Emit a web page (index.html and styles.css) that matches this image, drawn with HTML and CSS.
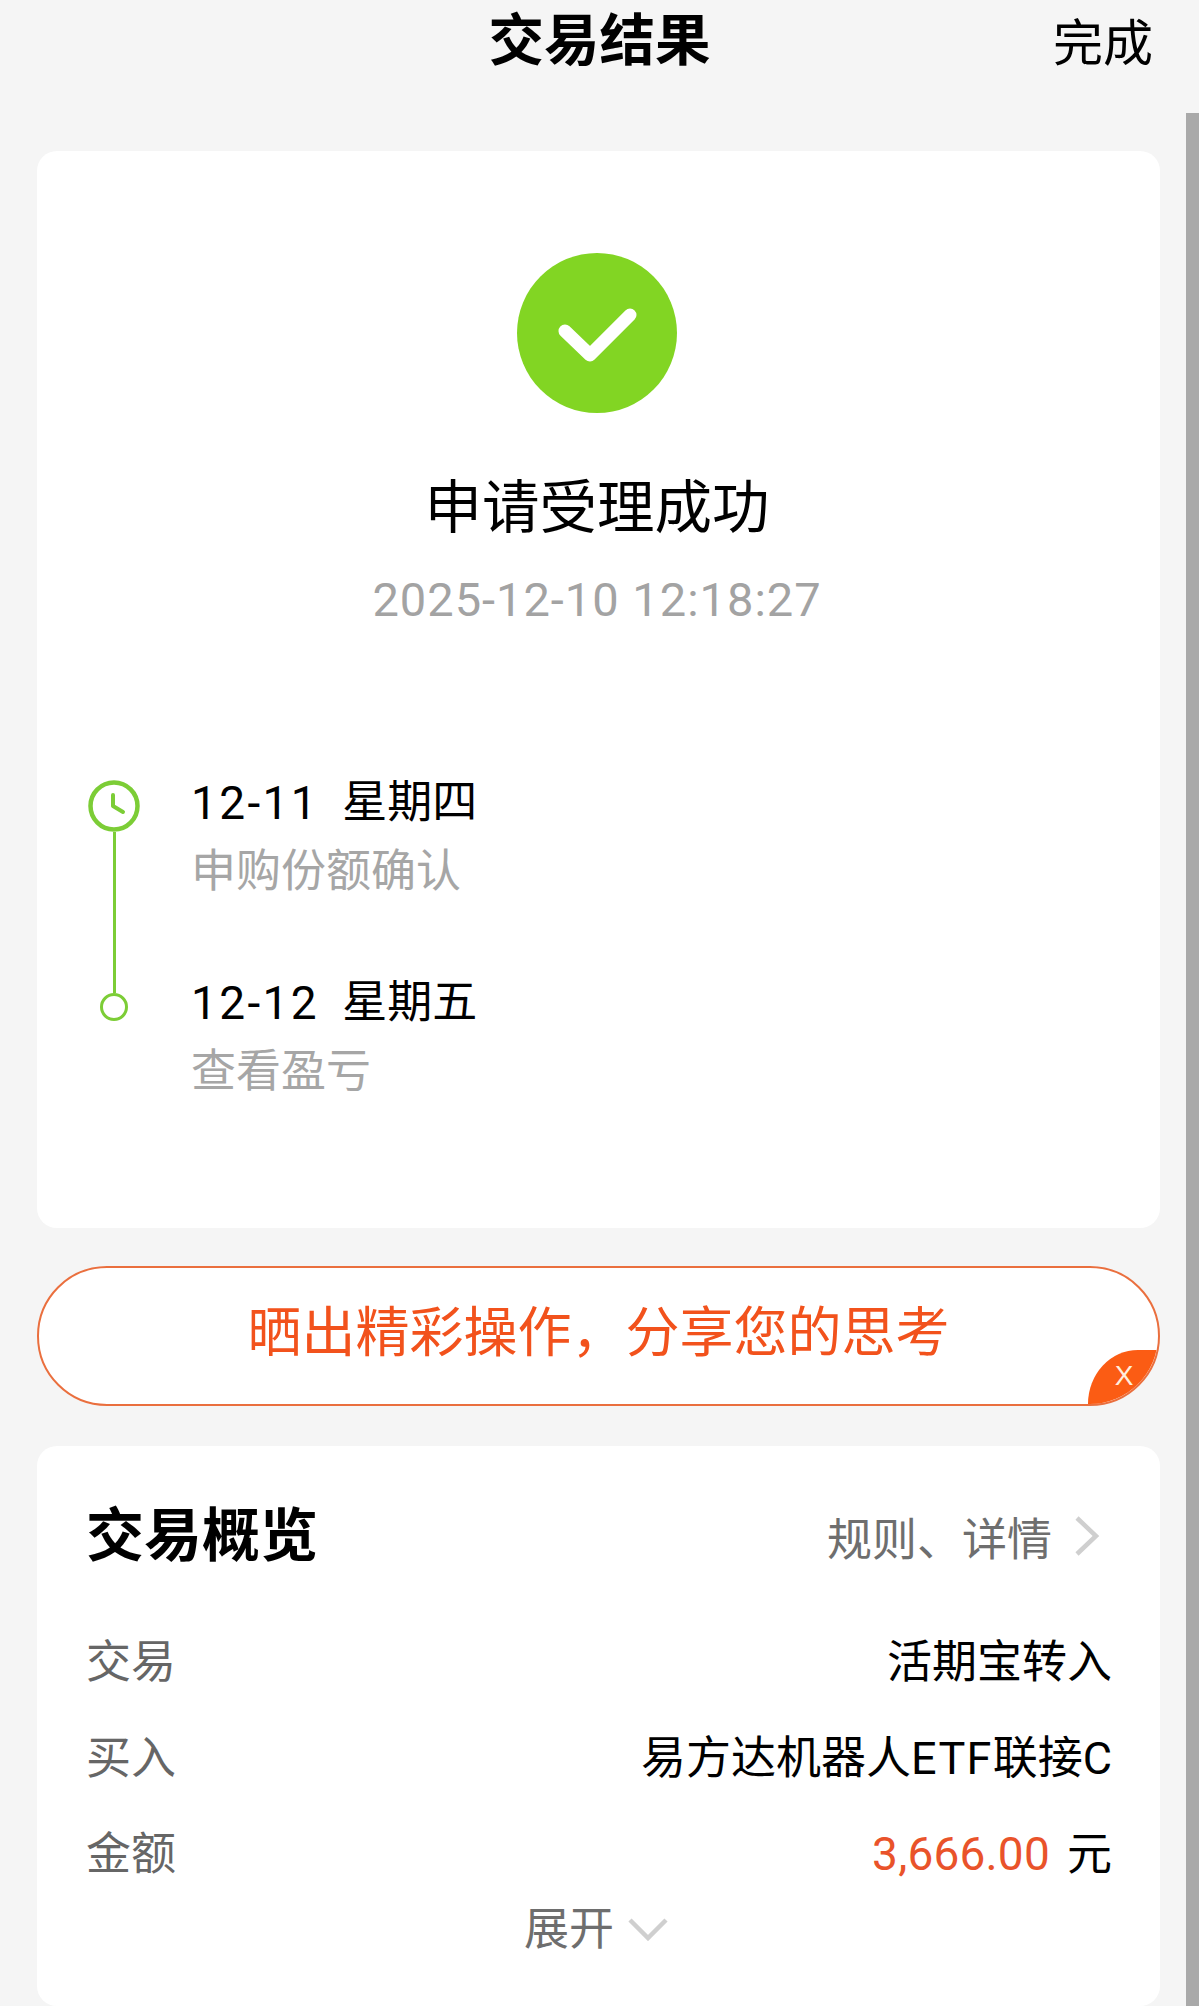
FILE: index.html
```html
<!DOCTYPE html>
<html lang="zh-CN">

<head>
    <meta charset="UTF-8">
    <meta name="viewport" content="width=device-width, initial-scale=1.0">
    <title>交易结果</title>
    <link rel="stylesheet" href="styles.css">
</head>

<body>
    <header class="top">
        <div class="top-title">交易结果</div>
        <div class="top-done">完成</div>
    </header>

    <div class="scrollbar"></div>

    <main class="content">
        <section class="card result">
            <svg class="result-icon" viewBox="0 0 160 160">
                <circle cx="80" cy="80" r="80" fill="#82d523"></circle>
                <path d="M48 78 L73 102 L113 62" fill="none" stroke="#fff" stroke-width="13" stroke-linecap="round" stroke-linejoin="round"></path>
            </svg>
            <div class="result-title">申请受理成功</div>
            <div class="result-time">2025-12-10 12:18:27</div>

            <div class="timeline">
                <div class="rail">
                    <svg class="rail-clock" viewBox="0 0 52 52">
                        <circle cx="26" cy="26" r="23.5" fill="none" stroke="#7ccd36" stroke-width="4.5"></circle>
                        <path d="M25 15 V26 L35 32" fill="none" stroke="#7ccd36" stroke-width="4" stroke-linecap="round" stroke-linejoin="round"></path>
                    </svg>
                    <div class="rail-line"></div>
                    <div class="rail-dot"></div>
                </div>
                <ul class="steps">
                    <li class="step">
                        <div class="step-date"><span class="step-day">12-11</span><span class="step-week">星期四</span></div>
                        <div class="step-desc">申购份额确认</div>
                    </li>
                    <li class="step">
                        <div class="step-date"><span class="step-day">12-12</span><span class="step-week">星期五</span></div>
                        <div class="step-desc">查看盈亏</div>
                    </li>
                </ul>
            </div>
        </section>

        <section class="share">
            <span class="share-text">晒出精彩操作，分享您的思考</span>
            <span class="share-close">X</span>
        </section>

        <section class="card overview">
            <div class="overview-head">
                <div class="overview-title">交易概览</div>
                <div class="overview-link">
                    <span>规则、详情</span>
                    <svg class="arrow-right" viewBox="0 0 28 44">
                        <path d="M4 4 L23 22 L4 40" fill="none" stroke="#cfcfcf" stroke-width="4.5"></path>
                    </svg>
                </div>
            </div>
            <div class="row">
                <span class="row-label">交易</span>
                <span class="row-value">活期宝转入</span>
            </div>
            <div class="row">
                <span class="row-label">买入</span>
                <span class="row-value">易方达机器人<span class="latin">ETF</span>联接C</span>
            </div>
            <div class="row">
                <span class="row-label">金额</span>
                <span class="row-value"><span class="amount">3,666.00</span><span class="unit">元</span></span>
            </div>
            <div class="toggle">
                <span>展开</span>
                <svg class="arrow-down" viewBox="0 0 40 24">
                    <path d="M2 3 L20 21 L38 3" fill="none" stroke="#cfcfcf" stroke-width="4.5"></path>
                </svg>
            </div>
        </section>
    </main>
</body>

</html>
```

FILE: styles.css
```css
html,
body {
    margin: 0;
    padding: 0;
    height: 100%;
}

body {
    position: relative;
    height: 2006px;
    overflow: hidden;
    background: #f5f5f5;
    color: #000;
    font-family: Roboto, "Noto Sans CJK SC", sans-serif;
}

.top {
    display: flex;
    justify-content: center;
    height: 84px;
    padding-bottom: 67px;
    position: relative;
}

.top-title {
    padding-top: 2px;
    font-size: 55.5px;
    font-weight: 700;
    line-height: 80px;
}

.top-done {
    position: absolute;
    top: 4px;
    right: 46px;
    font-size: 50px;
    line-height: 80px;
}

.scrollbar {
    position: absolute;
    top: 113px;
    right: 0;
    bottom: 0;
    width: 13px;
    background: #a9a9a9;
}

.content {
    display: flex;
    flex-direction: column;
    margin: 0 39px 0 37px;
}

.card {
    background: #fff;
    border-radius: 20px;
}

.result {
    display: flex;
    flex-direction: column;
    align-items: center;
    box-sizing: border-box;
    height: 1077px;
    padding: 102px 3px 0 0;
}

.result-icon {
    width: 160px;
    height: 160px;
}

.result-title {
    margin-top: 56px;
    font-size: 57.5px;
    line-height: 80px;
}

.result-time {
    margin-top: 21px;
    font-size: 47px;
    line-height: 60px;
    letter-spacing: 1px;
    color: #a3a3a3;
}

.timeline {
    display: flex;
    align-self: stretch;
    margin-top: 138px;
    padding-left: 49px;
}

.rail {
    display: flex;
    flex-direction: column;
    align-items: center;
    width: 56px;
    margin-right: 49px;
    padding-top: 12px;
}

.rail-clock {
    width: 52px;
    height: 52px;
    flex: none;
}

.rail-line {
    width: 3px;
    height: 161px;
    background: #7ccd36;
}

.rail-dot {
    box-sizing: border-box;
    width: 28px;
    height: 28px;
    border: 3.5px solid #7ccd36;
    border-radius: 50%;
}

.steps {
    list-style: none;
    margin: 0;
    padding: 0;
}

.step {
    margin-bottom: 64px;
}

.step-date {
    display: flex;
    padding-top: 1px;
    height: 67px;
    font-size: 46px;
    line-height: 68px;
}

.step-day {
    letter-spacing: 2.4px;
}

.step-week {
    margin-left: 23px;
    font-size: 45px;
}

.step-desc {
    padding-top: 2px;
    height: 66px;
    font-size: 45px;
    line-height: 68px;
    color: #a6a6a6;
}

.share {
    position: relative;
    display: flex;
    align-items: center;
    justify-content: center;
    box-sizing: border-box;
    height: 140px;
    margin-top: 38px;
    padding-bottom: 4px;
    overflow: hidden;
    background: #fff;
    border: 2px solid #ea6f3e;
    border-radius: 70px;
}

.share-text {
    font-size: 54px;
    line-height: 130px;
    color: #f2521c;
}

.share-close {
    position: absolute;
    right: 0;
    bottom: 0;
    width: 70px;
    height: 54px;
    padding-left: 2px;
    box-sizing: border-box;
    background: #fb5c14;
    border-top-left-radius: 50px 54px;
    font-family: "Liberation Sans", sans-serif;
    font-size: 28px;
    line-height: 52px;
    text-align: center;
    color: #ffeedd;
}

.overview {
    box-sizing: border-box;
    height: 560px;
    margin-top: 40px;
    padding: 50px 48px 0 49px;
}

.overview-head {
    display: flex;
    align-items: center;
    justify-content: space-between;
    height: 80px;
    margin-bottom: 34px;
}

.overview-title {
    padding-top: 1px;
    font-size: 58px;
    font-weight: 700;
    line-height: 79px;
}

.overview-link {
    display: flex;
    align-items: center;
    padding-right: 11px;
    font-size: 45px;
    color: #6e6e6e;
}

.arrow-right {
    width: 28px;
    height: 44px;
    margin-left: 21px;
}

.row {
    display: flex;
    align-items: center;
    justify-content: space-between;
    height: 96px;
    font-size: 45px;
}

.row-label {
    color: #666;
}

.row-value {
    display: block;
}

.latin {
    letter-spacing: 1.3px;
}

.amount {
    font-size: 46px;
    letter-spacing: 0.2px;
    color: #e9532a;
}

.unit {
    margin-left: 17px;
}

.toggle {
    display: flex;
    align-items: center;
    justify-content: center;
    height: 54px;
    padding-right: 6px;
    font-size: 45px;
    color: #6e6e6e;
}

.arrow-down {
    width: 40px;
    height: 24px;
    margin-top: 8px;
    margin-left: 14px;
}
```
